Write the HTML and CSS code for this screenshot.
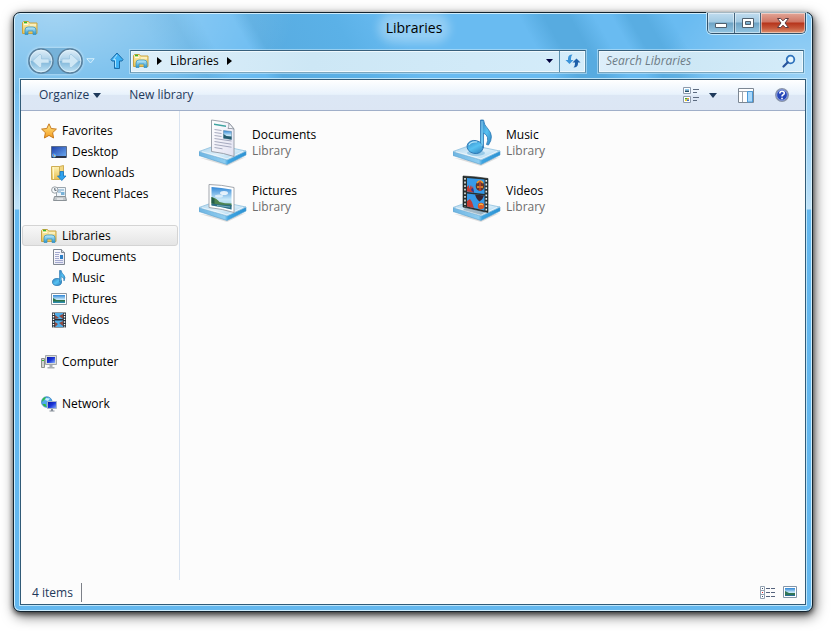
FILE: index.html
```html
<!DOCTYPE html>
<html lang="en">
  <head>
    <meta charset="UTF-8" />
    <meta name="viewport" content="width=device-width, initial-scale=1.0" />
    <title>Libraries</title>
    <link rel="stylesheet" href="styles.css">
  </head>
  <body>
    <!-- shared icons -->
    <svg class="sprite" aria-hidden="true">
      <defs>
        <linearGradient id="gold" x1="0" y1="0" x2="0" y2="1"><stop offset="0" stop-color="#fff3b4"/><stop offset="1" stop-color="#e6bf52"/></linearGradient>
        <linearGradient id="cyan" x1="0" y1="0" x2="0" y2="1"><stop offset="0" stop-color="#c4effc"/><stop offset="1" stop-color="#2592cc"/></linearGradient>
        <linearGradient id="star" x1="0" y1="0" x2="0" y2="1"><stop offset="0" stop-color="#ffe98a"/><stop offset="1" stop-color="#f59a1c"/></linearGradient>
        <linearGradient id="screen" x1="0" y1="0" x2="1" y2="1"><stop offset="0" stop-color="#1c3da8"/><stop offset="1" stop-color="#6fb0f4"/></linearGradient>
        <linearGradient id="monitor" x1="0" y1="0" x2="1" y2="1"><stop offset="0" stop-color="#0712a0"/><stop offset=".5" stop-color="#1b35d8"/><stop offset="1" stop-color="#8bb4ff"/></linearGradient>
        <linearGradient id="note" x1="0" y1="0" x2="1" y2="1"><stop offset="0" stop-color="#2d7fc0"/><stop offset=".5" stop-color="#58c2f2"/><stop offset="1" stop-color="#2a7dbb"/></linearGradient>
        <linearGradient id="tray" x1="0" y1="0" x2="1" y2="1"><stop offset="0" stop-color="#a5d0ea"/><stop offset=".5" stop-color="#dceffa"/><stop offset="1" stop-color="#9ed0ee"/></linearGradient>
        <linearGradient id="edge" x1="0" y1="0" x2="1" y2="0"><stop offset="0" stop-color="#6fb5e2"/><stop offset=".55" stop-color="#8fcdf0"/><stop offset=".62" stop-color="#3fa5e2"/><stop offset="1" stop-color="#2c93d4"/></linearGradient>
        <linearGradient id="sky" x1="0" y1="0" x2="0" y2="1"><stop offset="0" stop-color="#2f86d6"/><stop offset=".55" stop-color="#c8e8f8"/><stop offset="1" stop-color="#8cc6dc"/></linearGradient>
        <linearGradient id="paper" x1="0" y1="0" x2="1" y2="1"><stop offset="0" stop-color="#ffffff"/><stop offset="1" stop-color="#e2e2f2"/></linearGradient>
        <linearGradient id="orb" x1="0" y1="0" x2="0" y2="1"><stop offset="0" stop-color="#e2f0f9"/><stop offset=".48" stop-color="#a9cfe8"/><stop offset=".52" stop-color="#7fb6da"/><stop offset="1" stop-color="#c5e6f7"/></linearGradient>
      </defs>

      <symbol id="i-library" viewBox="0 0 16 16">
        <path d="M.5 13.500V2.500l1-1h5l1 1.500h7.500v10.500z" fill="url(#gold)" stroke="#c9a340"/>
        <path d="M2 4.500h4M8 5h6" stroke="#fffbe0"/>
        <path d="M2 2.500h3" stroke="#35b52e" stroke-width="1.500"/>
        <path d="M3 14.500V10q0-3 3-3h5q3 0 3 3v4.500h-3v-3.500H6v3.500z" fill="url(#cyan)" stroke="#3d94c0" stroke-width=".8"/>
      </symbol>
      <symbol id="i-star" viewBox="0 0 16 16">
        <path d="M8 .8l2.200 4.700 5.200.6-3.800 3.600 1 5.300L8 12.400 3.400 15l1-5.300L.6 6.100l5.200-.6z" fill="url(#star)" stroke="#c77a1e" stroke-linejoin="round"/>
      </symbol>
      <symbol id="i-desktop" viewBox="0 0 16 16">
        <path d="M.5 2.500h15v11H.5z" fill="url(#screen)" stroke="#5d6f8c"/>
        <path d="M1 12h14v2H1z" fill="#2b3448"/>
        <circle cx="3" cy="11.500" r="2" fill="#4aa8ff"/><path d="M2 10.500h1v1H2z" fill="#f35a3c"/><path d="M3 11.500h1.500v1H3z" fill="#ffe26a"/>
      </symbol>
      <symbol id="i-downloads" viewBox="0 0 16 16">
        <path d="M.5 1.500h8v13h-8z" fill="url(#gold)" stroke="#cfae55"/>
        <path d="M8.500 1.500l4-1v12l-4 2z" fill="#f2d680" stroke="#cfae55"/><path d="M2.500 2v12" stroke="#fff6cc"/>
        <path d="M9 6.500h3.500V11H15l-4.200 4.500L6.500 11H9z" fill="#2ea2ee" stroke="#1673bd" stroke-width=".8"/>
      </symbol>
      <symbol id="i-recent" viewBox="0 0 16 16">
        <path d="M5.500 1.500h9v9h-9z" fill="#eef5fa" stroke="#9aa5ad"/><path d="M7 4h6M7 6h3" stroke="#6f9fc4"/><path d="M10 6h3.500v3H10z" fill="#78b2d8"/>
        <path d="M3.500 10.500h11l1 4h-13z" fill="#c4c9cc" stroke="#8b9297"/><path d="M6 13h6" stroke="#fff"/>
        <circle cx="3.800" cy="4" r="3.200" fill="#f5f8fa" stroke="#9aa1a6"/><path d="M3.800 2v2.300h1.700" fill="none" stroke="#55606a"/>
      </symbol>
      <symbol id="i-document" viewBox="0 0 16 16">
        <path d="M2.500.5h8l3 3v12h-11z" fill="url(#paper)" stroke="#7f8790"/><path d="M10.500.5v3h3" fill="#d5dae2" stroke="#7f8790"/>
        <path d="M4 3.500h5M4 5.500h4M4 7.500h4M4 9.500h4M4 11.500h8M4 13.500h8" stroke="#a3a9cf"/>
        <path d="M9 6h3v4H9z" fill="#2c7ec5"/>
      </symbol>
      <symbol id="i-music" viewBox="0 0 16 16">
        <ellipse cx="6" cy="12" rx="4.500" ry="3.500" fill="url(#note)" stroke="#2a77b0" stroke-width=".8"/>
        <path d="M8.500 12V.5h1.700q.4 2.700 2.500 4.300 2.400 2.400.3 6.200.4-3-2.800-4.500V12z" fill="url(#note)" stroke="#2a77b0" stroke-width=".6"/>
      </symbol>
      <symbol id="i-picture" viewBox="0 0 16 16">
        <path d="M.5 2.500h15v11H.5z" fill="#fff" stroke="#8b959e"/><path d="M2 4h12v8H2z" fill="url(#sky)"/>
        <path d="M2 7l3.500 2H14v2H2z" fill="#2f7448"/><path d="M2 10.500h12V12H2z" fill="#2c8bab"/>
      </symbol>
      <symbol id="i-video" viewBox="0 0 16 16">
        <path d="M1 .5h14v15H1z" fill="#27323c"/><path d="M4 1h8v6H4zM4 8.500h8V15H4z" fill="#4eaeea"/>
        <path d="M2.500 1.500v14M13.500 1.500v14" stroke="#fff" stroke-width="1.400" stroke-dasharray="1.400 1.200"/>
        <path d="M4 3l4 3-4 1zM12 2v5L8 4zM4 10l3 2-3 3zM12 9v5l-4-3z" fill="#8f4a42"/>
      </symbol>
      <symbol id="i-computer" viewBox="0 0 16 16">
        <path d="M.5 4.500h3v9h-3z" fill="#d3d5d1" stroke="#8c918d"/><path d="M1 6.500h2" stroke="#32b72f"/>
        <path d="M4.500 1.500h11v9h-11z" fill="#d9dcda" stroke="#a2a7aa"/><path d="M6 3h8v6H6z" fill="url(#monitor)"/>
        <path d="M8.500 11h3v2h2v1.500h-7V13h2z" fill="#a9aeb2"/>
      </symbol>
      <symbol id="i-network" viewBox="0 0 16 16">
        <circle cx="5.800" cy="6" r="5.300" fill="#4fa9ea" stroke="#2f79ba" stroke-width=".7"/>
        <path d="M1.500 3q1.500-2 3.500-2L4 3 2.500 4.500 1 6zM1.500 8l3 0 1 3Q3 11 1.500 8z" fill="#2fbf3b"/><path d="M5 2l4 .5-2 2.500-3-1z" fill="#c5eeff"/>
        <path d="M6.500 5.500h9v7h-9z" fill="url(#monitor)" stroke="#a7b5ca"/><path d="M10 13h2v1.500h1.500v1h-5v-1H10z" fill="#858d98"/>
      </symbol>
      <symbol id="i-tray" viewBox="0 0 48 48">
        <path d="M1 39l27 8 19-9-20 4z" fill="#000" opacity=".12"/>
        <path d="M0 32.500v4L28 45.500 47 36v-4L28 41z" fill="url(#edge)" stroke="#559fce" stroke-width=".6"/>
        <path d="M0 32.500l18-6.500 29 6L28 41z" fill="url(#tray)" stroke="#8fc0de" stroke-width=".8"/>
        <path d="M3 32.800l25 7 16-7.300" fill="none" stroke="#fff" opacity=".6"/>
      </symbol>
    </svg>

    <div class="window">
      <header class="titlebar">
        <svg class="icon"><use href="#i-library"/></svg>
        <h1 class="title">Libraries</h1>
        <div class="caption">
          <button class="caption-btn" aria-label="Minimize">
            <svg width="14" height="12"><path d="M1.500 6.500h11v4h-11z" fill="#fff" stroke="#50606e"/></svg>
          </button>
          <button class="caption-btn" aria-label="Maximize">
            <svg width="12" height="12"><path d="M.5 1.500h11v9H.5zM3.500 4.500v3h5v-3z" fill="#fff" fill-rule="evenodd" stroke="#50606e"/></svg>
          </button>
          <button class="caption-btn close" aria-label="Close">
            <svg width="14" height="12"><path d="M1.500 1.500h3.200L7 3.800l2.300-2.300h3.200L9 6l3.500 4.500H9.300L7 8.200l-2.300 2.300H1.500L5 6z" fill="#fff" stroke="#5b3b40"/></svg>
          </button>
        </div>
      </header>

      <nav class="navbar" aria-label="Location">
        <div class="history">
          <button class="plain" aria-label="Back">
            <svg width="26" height="26"><circle cx="13" cy="13" r="12" fill="url(#orb)" stroke="#5a7f9b" stroke-width="1.500"/><circle cx="13" cy="13" r="10.800" fill="none" stroke="#e3f3fc" opacity=".7"/><path d="M4.500 13l7.500-7 1.500 1.500v3.500h7.500v4h-7.500v3.500L12 20z" fill="#cfe7f5" stroke="#94bfdb" stroke-width=".6"/></svg>
          </button>
          <button class="plain" aria-label="Forward">
            <svg width="26" height="26"><circle cx="13" cy="13" r="12" fill="url(#orb)" stroke="#5a7f9b" stroke-width="1.500"/><circle cx="13" cy="13" r="10.800" fill="none" stroke="#e3f3fc" opacity=".7"/><path d="M21.500 13L14 6l-1.500 1.500v3.500H5v4h7.500v3.500L14 20z" fill="#cfe7f5" stroke="#94bfdb" stroke-width=".6"/></svg>
          </button>
        </div>
        <button class="plain recent" aria-label="Recent pages">
          <svg width="9" height="6"><path d="M.8.700h7.400L4.500 5z" fill="#8fcdf3" stroke="#d2edfc"/></svg>
        </button>
        <button class="plain up" aria-label="Up">
          <svg width="14" height="18"><path d="M7 1l6 6.500-1 1.500H9.500v7.500h-5V9H2L1 7.500z" fill="#3fb2f5" stroke="#1c6da8" stroke-linejoin="round"/><path d="M7 3L3.500 7.500h2V15" fill="none" stroke="#a9e3ff"/></svg>
        </button>
        <div class="address">
          <svg class="icon"><use href="#i-library"/></svg>
          <svg class="crumb-arrow" width="5" height="8"><path d="M0 0l5 4-5 4z"/></svg>
          <a class="crumb" href="#">Libraries</a>
          <svg class="crumb-arrow" width="5" height="8"><path d="M0 0l5 4-5 4z"/></svg>
          <button class="plain history-btn" aria-label="Previous locations">
            <svg width="7" height="4"><path d="M0 0h7L3.500 4z" fill="#00003c"/></svg>
          </button>
          <button class="plain refresh" aria-label="Refresh">
            <svg width="16" height="16"><path d="M7.500 1.500Q3 1.500 3 5.500V7H.5l4 4 4-4H6V5.500q0-2.500 1.500-4z" fill="#3b93d8"/><path d="M8.500 14.500q4.500 0 4.500-4V9.500h2.500l-4-4-4 4H10v1q0 2.500-1.500 4z" fill="#1d5faa"/></svg>
          </button>
        </div>
        <div class="search">
          <input class="search-input" type="search" placeholder="Search Libraries" aria-label="Search Libraries" />
          <svg width="14" height="14"><circle cx="8.500" cy="5.500" r="3.800" fill="#e5f5fd" stroke="#2f73bd" stroke-width="1.800"/><path d="M5.800 8.200L1.500 12.500" stroke="#27549c" stroke-width="2.200" stroke-linecap="round"/></svg>
        </div>
      </nav>

      <div class="frame">
        <div class="toolbar">
          <button class="tool">Organize
            <svg width="8" height="5"><path d="M0 0h8L4 5z" fill="#1e395b"/></svg>
          </button>
          <button class="tool">New library</button>
          <div class="tool-right">
            <button class="plain" aria-label="Change your view">
              <svg width="16" height="16"><path d="M.5.500h7v6h-7zM.5 9.500h7v6h-7z" fill="#fff" stroke="#8d9aab"/><path d="M2 2h4v1.500H2z" fill="#8cc9ed"/><path d="M2 3.500h4V5H2z" fill="#234e68"/><path d="M2 11h2v1.500H2z" fill="#38a83a"/><path d="M4 11h2v1.500H4z" fill="#f0a527"/><path d="M2 12.500h2V14H2z" fill="#e9cc28"/><path d="M4 12.500h2V14H4z" fill="#3d68c9"/><path d="M10 2.500h6M10 5.500h4M10 10.500h6M10 13.500h4" stroke="#5c6b80"/></svg>
            </button>
            <button class="plain more" aria-label="More options">
              <svg width="8" height="5"><path d="M0 0h8L4 5z" fill="#1e395b"/></svg>
            </button>
            <button class="plain pane" aria-label="Show the preview pane">
              <svg width="16" height="15"><path d="M.5.500h15v14H.5z" fill="#fff" stroke="#7c8793"/><path d="M1 3.500h14M4.500 4v10" stroke="#9ba5b0"/><path d="M9.500 3.500h5v10.500h-5z" fill="#a9d8fb" stroke="#4b9ad8"/></svg>
            </button>
            <button class="plain" aria-label="Get help">
              <svg width="14" height="14"><circle cx="7" cy="7" r="6.300" fill="#2646b8" stroke="#8b96a8" stroke-width="1.200"/><circle cx="7" cy="7" r="5.300" fill="none" stroke="#c4d2f5" stroke-width=".6"/><path d="M4.800 5.500q0-2.200 2.300-2.200t2.200 1.900q0 1-1.200 1.600Q7 7.300 7 8.500M7 9.700v1.500" fill="none" stroke="#fff" stroke-width="1.600"/></svg>
            </button>
          </div>
        </div>

        <div class="main">
          <nav class="sidebar" aria-label="Folders">
            <div class="group">
              <a class="node" href="#"><svg class="icon"><use href="#i-star"/></svg>Favorites</a>
              <a class="node child" href="#"><svg class="icon"><use href="#i-desktop"/></svg>Desktop</a>
              <a class="node child" href="#"><svg class="icon"><use href="#i-downloads"/></svg>Downloads</a>
              <a class="node child" href="#"><svg class="icon"><use href="#i-recent"/></svg>Recent Places</a>
            </div>
            <div class="group">
              <a class="node selected" href="#"><svg class="icon"><use href="#i-library"/></svg>Libraries</a>
              <a class="node child" href="#"><svg class="icon"><use href="#i-document"/></svg>Documents</a>
              <a class="node child" href="#"><svg class="icon"><use href="#i-music"/></svg>Music</a>
              <a class="node child" href="#"><svg class="icon"><use href="#i-picture"/></svg>Pictures</a>
              <a class="node child" href="#"><svg class="icon"><use href="#i-video"/></svg>Videos</a>
            </div>
            <div class="group">
              <a class="node" href="#"><svg class="icon"><use href="#i-computer"/></svg>Computer</a>
            </div>
            <div class="group">
              <a class="node" href="#"><svg class="icon"><use href="#i-network"/></svg>Network</a>
            </div>
          </nav>

          <main class="files">
            <a class="file" href="#">
              <svg class="thumb" viewBox="0 0 48 48">
                <use href="#i-tray"/>
                <path d="M12.500 1q10 1.200 17.500 3l5 6v27.500q-10-3.500-22.500-5z" fill="url(#paper)" stroke="#9298a3" stroke-width=".9"/>
                <path d="M30 4q0 4-1 5.500 3-.3 6 .500z" fill="#f4f6fa" stroke="#868d98" stroke-width=".8"/>
                <path d="M15 4.500l12 2v1.500L15 6z" fill="#3fa3a0"/>
                <path d="M15.500 10.500l7 1M15.500 13.500l7 1M15.500 16.500l7 1M15.500 19.500l17 2.500M15.500 22.500l17 2.700M15.500 25.500l17 2.700M15.500 28.500l8 1.300" stroke="#9da2b8" stroke-width=".9"/>
                <path d="M24.500 11.500l8 1v8l-8-1.200z" fill="url(#sky)" stroke="#55809c" stroke-width=".5"/><path d="M24.500 15l3 2 5 .500v3l-8-1.200z" fill="#255b6e"/>
              </svg>
              <span class="label"><b class="name">Documents</b><span class="kind">Library</span></span>
            </a>
            <a class="file" href="#">
              <svg class="thumb" viewBox="0 0 48 48">
                <use href="#i-tray"/>
                <ellipse cx="23" cy="34" rx="9" ry="3" fill="#5da9d8" opacity=".5"/>
                <path d="M27.500 28V1h3q.5 5 4.500 9 6.500 7 .5 16l-2-.500Q37 17 30.500 14v15z" fill="url(#note)" stroke="#2c77b4" stroke-width=".8"/>
                <ellipse cx="22" cy="28" rx="8" ry="6.500" fill="url(#note)" stroke="#2c77b4" stroke-width=".9" transform="rotate(12 22 28)"/>
                <path d="M16 26q2-4 8-3" fill="none" stroke="#b4e5fb" stroke-width="1.200"/>
                <path d="M29 2v25" stroke="#9ddcf8" stroke-width=".9"/>
              </svg>
              <span class="label"><b class="name">Music</b><span class="kind">Library</span></span>
            </a>
            <a class="file" href="#">
              <svg class="thumb" viewBox="0 0 48 48">
                <use href="#i-tray"/>
                <path d="M10 9.500q13 .3 25 3v25q-11-3.500-25-5z" fill="#fff" stroke="#979da5" stroke-width=".9"/>
                <path d="M12.500 12q10 .5 20 2.500v20q-9-2.500-20-4z" fill="url(#sky)"/>
                <ellipse cx="25" cy="18" rx="4" ry="2" fill="#fff" opacity=".8"/><ellipse cx="20" cy="21" rx="4" ry="1.500" fill="#fff" opacity=".6"/>
                <path d="M12.500 22q5 1 8 5 5 1.500 12 1.500v3q-9-.5-20-2z" fill="#4d8450"/><path d="M12.500 22l3 2v5l-3-1z" fill="#235d48"/>
                <path d="M12.500 28.500q10 1.500 20 1.500v4.500q-9-2.500-20-4z" fill="#2d6d83"/><path d="M18 30.500l13 1.500" stroke="#95cfd9" stroke-width=".7"/>
              </svg>
              <span class="label"><b class="name">Pictures</b><span class="kind">Library</span></span>
            </a>
            <a class="file" href="#">
              <svg class="thumb" viewBox="0 0 48 48">
                <use href="#i-tray"/>
                <path d="M12 33l21 4-5 3-18-5z" fill="#566f80" opacity=".4"/>
                <path d="M10 1q13 .5 25 2.500V37.500L10 32z" fill="#29302f" stroke="#151b1c" stroke-width=".6"/>
                <path d="M14 3l17.500 1.500v14.500L14 17zM14 18.500l17.500 2v15L14 31.500z" fill="#3699e8"/>
                <path d="M14 12l2-2v4l2-4 1 3 1-2 1 6.500-7-1zM14 26l3-2 2 3 2 6-7-1.500z" fill="#c43d34"/>
                <path d="M18 15q2-5 3 3z" fill="#1e3c9b"/>
                <ellipse cx="27" cy="11" rx="4.300" ry="5" fill="#62352b"/><path d="M24 8q3-4 6 0M24 12h6" fill="none" stroke="#ef9d2c" stroke-width="1.500"/><path d="M27 6v10" stroke="#d8442f" stroke-width="1.300"/>
                <path d="M22 19.500l9 1q-1 4-4.500 6-3-2-4.500-7z" fill="#3b2530"/><circle cx="28" cy="31" r="3.200" fill="#d85a28"/><path d="M26 30q2-2 4 0" fill="none" stroke="#ffd44a"/>
                <path d="M12 3v29M33.300 5v31" stroke="#e6eeee" stroke-width="1.600" stroke-dasharray="1.800 1.800"/>
              </svg>
              <span class="label"><b class="name">Videos</b><span class="kind">Library</span></span>
            </a>
          </main>
        </div>

        <footer class="status">
          <span class="count">4 items</span>
          <div class="views">
            <button class="plain" aria-label="Details view">
              <svg width="15" height="13"><path d="M.5.500h4v12h-4zM.5 4.500h4M.5 8.500h4" fill="#fff" stroke="#93a2b2"/><path d="M2 2h1v1H2zM2 10h1v1H2z" fill="#37506d"/><path d="M2 6h1v1H2z" fill="#d22"/><path d="M6 2.500h4M11 2.500h4M6 6.500h4M11 6.500h4M6 10.500h4M11 10.500h4" stroke="#54627c"/></svg>
            </button>
            <button class="plain" aria-label="Thumbnail view">
              <svg width="14" height="12"><path d="M.5.500h13v11H.5z" fill="#fff" stroke="#8295a8"/><path d="M2 2h10v8H2z" fill="url(#sky)"/><path d="M2 5l4 2h6v3H2z" fill="#317657"/><path d="M2 9h10v1H2z" fill="#276d94"/></svg>
            </button>
          </div>
        </footer>
      </div>
    </div>
  </body>
</html>
```
FILE: styles.css
```css
* {
  box-sizing: border-box;
}
body {
  margin: 0;
  min-height: 100vh;
  padding: 12px 18px 19px 13px;
  display: flex;
  background: #ffffff;
  color: #000000;
  font-family: 'Open Sans', 'Noto Sans', sans-serif;
  font-size: 12px;
  line-height: 16px;
}
a {
  color: inherit;
  text-decoration: none;
}
button {
  font: inherit;
  color: inherit;
}
svg {
  display: block;
  flex: none;
}
.sprite {
  position: absolute;
  width: 0;
  height: 0;
}
.icon {
  width: 16px;
  height: 16px;
}
.plain {
  display: flex;
  align-items: center;
  justify-content: center;
  padding: 0;
  border: 0;
  background: none;
}

/* glass window */
.window {
  flex: 1;
  min-width: 0;
  display: flex;
  flex-direction: column;
  padding: 0 5px 5px;
  border: 1px solid #14242f;
  border-radius: 7px;
  background:
    linear-gradient(to bottom, rgba(255, 255, 255, 0) 80px, rgba(255, 255, 255, 0.6) 196px, rgba(255, 255, 255, 0) 197px),
    radial-gradient(ellipse 240px 120px at 40px 0, rgba(255, 255, 255, 0.42), rgba(255, 255, 255, 0)),
    radial-gradient(ellipse 150px 120px at 100% 70px, rgba(255, 255, 255, 0.35), rgba(255, 255, 255, 0)),
    linear-gradient(60deg, #62b5ea 20%, #5aaee3 24%, #69bbf1 27% 31%, #58ace1 33%, #5bb1e7 43%, #69bbf1 50% 65%, #57abe0 68% 71%, #69bbf1 74% 76%, #59ade2 78% 80%, #69bbf1 83%) top / 100% 80px no-repeat,
    #64b8ef;
  box-shadow:
    inset 0 0 0 1px rgba(225, 246, 255, 0.85),
    0 2px 5px rgba(0, 0, 0, 0.6),
    2px 4px 13px rgba(0, 0, 0, 0.6);
}
.titlebar {
  display: grid;
  grid-template-columns: 1fr auto 1fr;
  height: 33px;
  padding: 0 1px 0 3px;
}
.titlebar .icon {
  margin-top: 7px;
}
.title {
  margin: 6px 0 0;
  height: 18px;
  padding: 0 2px;
  border-radius: 9px;
  background: rgba(255, 255, 255, 0.28);
  box-shadow: 0 0 8px 6px rgba(255, 255, 255, 0.28);
  font-size: 14px;
  font-weight: 400;
  line-height: 18px;
}
.caption {
  justify-self: end;
  align-self: start;
  display: flex;
  height: 21px;
  border: 1px solid #34536b;
  border-top: 0;
  border-radius: 0 0 5px 5px;
  box-shadow: 0 0 0 1px rgba(225, 246, 255, 0.7);
}
.caption-btn {
  display: flex;
  align-items: center;
  justify-content: center;
  width: 27px;
  padding: 0;
  border: 0;
  border-right: 1px solid #44667f;
  border-bottom-left-radius: 4px;
  background: linear-gradient(#c0dcef 0, #a3cae2 45%, #6ea3c5 50%, #94c6e3 100%);
  box-shadow: inset 0 0 0 1px rgba(255, 255, 255, 0.45);
}
.caption-btn + .caption-btn {
  width: 26px;
  border-radius: 0;
}
.caption-btn + .close {
  width: 44px;
  border-right: 0;
  border-bottom-right-radius: 4px;
  background: linear-gradient(#e2a697 0, #cf7563 45%, #b6341b 50%, #c5573a 75%, #dc9270 100%);
}

/* back, forward, address, search */
.navbar {
  display: flex;
  align-items: center;
  height: 33px;
  padding: 0 3px 3px 9px;
}
.history {
  display: flex;
  gap: 3px;
  border-radius: 13px;
  background: rgba(75, 135, 175, 0.35);
  box-shadow: 0 0 3px rgba(255, 255, 255, 0.7);
}
.recent {
  width: 15px;
}
.up {
  width: 14px;
  margin: 0 6px 0 12px;
}
.address,
.search {
  display: flex;
  align-items: center;
  height: 23px;
  border: 1px solid;
  border-color: #365f7c #5a8fae #7aa5bc;
  background: linear-gradient(100deg, #deeffa, #cde7f5 40%, #d4ecfa);
  box-shadow: inset 0 0 0 1px #eef8fd, 0 0 0 1px rgba(210, 238, 252, 0.5);
}
.address {
  flex: 1;
  padding-left: 2px;
}
.crumb-arrow {
  margin-left: 8px;
}
.crumb {
  margin-left: 8px;
}
.history-btn {
  width: 20px;
  height: 21px;
  margin-left: auto;
}
.refresh {
  width: 26px;
  height: 21px;
  border-left: 1px solid #5a8fae;
}
.search {
  width: 206px;
  margin-left: 12px;
  padding: 0 7px;
}
.search-input {
  flex: 1;
  min-width: 0;
  padding: 0;
  border: 0;
  outline: 0;
  background: none;
  font: italic 12px/16px 'Open Sans', 'Noto Sans', sans-serif;
}
.search-input::placeholder {
  color: #6f7d87;
  opacity: 1;
}

/* client area */
.frame {
  flex: 1;
  display: flex;
  flex-direction: column;
  margin: 0 1px 1px;
  border: 1px solid #315b78;
  background: #fcfcfc;
  box-shadow: 0 0 0 1px rgba(205, 236, 252, 0.85);
}
.toolbar {
  display: flex;
  align-items: center;
  height: 31px;
  padding: 0 16px 0 18px;
  border-bottom: 1px solid #a0afc9;
  background: linear-gradient(#ffffff 0, #e8f2fc 48%, #dce7f5 50%, #dce6f4 100%);
  color: #1e395b;
}
.tool {
  display: flex;
  align-items: center;
  gap: 4px;
  margin-right: 28px;
  padding: 0;
  border: 0;
  background: none;
}
.tool-right {
  display: flex;
  align-items: center;
  margin-left: auto;
}
.more {
  margin-left: 10px;
}
.pane {
  margin: 0 21px;
}
.main {
  flex: 1;
  display: flex;
}
.sidebar {
  width: 159px;
  padding: 9px 1px 0;
  border-right: 1px solid #d9e3f0;
}
.group {
  margin-bottom: 21px;
}
.node {
  display: flex;
  align-items: center;
  gap: 5px;
  height: 21px;
  padding-left: 19px;
}
.node.child {
  padding-left: 29px;
}
.node.selected {
  padding-left: 18px;
  border: 1px solid #d4d4d4;
  border-radius: 3px;
  background: linear-gradient(#f8f8f8, #e5e5e5);
}
.files {
  flex: 1;
  display: grid;
  grid-template-columns: repeat(auto-fill, 254px);
  grid-auto-rows: 48px;
  row-gap: 8px;
  align-content: start;
  padding: 8px 19px;
}
.file {
  display: flex;
  align-items: center;
  gap: 5px;
}
.thumb {
  width: 48px;
  height: 48px;
}
.label,
.name,
.kind {
  display: block;
}
.name {
  font-weight: 400;
}
.kind {
  color: #6d6d6d;
}
.status {
  display: flex;
  align-items: center;
  height: 24px;
  padding: 0 8px 0 11px;
  color: #1e395b;
}
.count {
  padding-right: 8px;
  border-right: 1px solid #7c8088;
  line-height: 19px;
}
.views {
  display: flex;
  align-items: center;
  gap: 8px;
  margin-left: auto;
}
```
